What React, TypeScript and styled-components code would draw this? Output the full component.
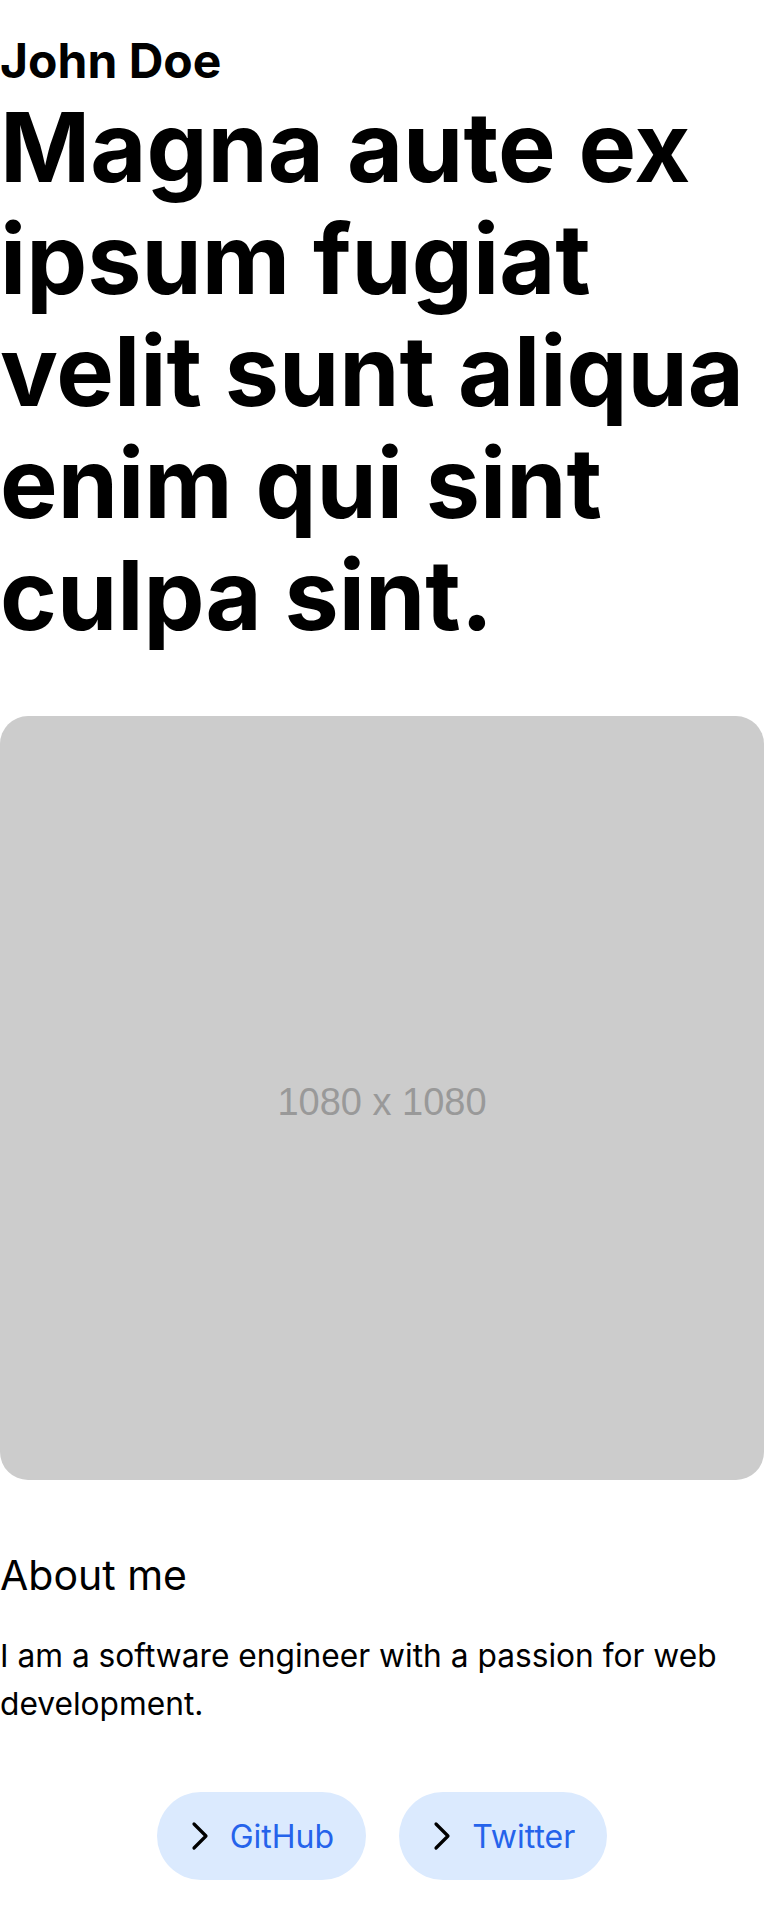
import styled, { createGlobalStyle } from "styled-components";
import { ChevronRight } from "lucide-react";

const GlobalStyle = createGlobalStyle`
    html, body {
        margin: 0;
        padding: 0;
        background: #ffffff;
    }
    body {
        font-family: Inter, "Noto Sans", sans-serif;
        color: #000000;
    }
`;

const links = [
    { label: "GitHub", href: "#github" },
    { label: "Twitter", href: "#twitter" },
];

export default function App() {
    return (
        <>
            <GlobalStyle />
            <Page>
                <Name>John Doe</Name>
                <Headline>Magna aute ex ipsum fugiat velit sunt aliqua enim qui sint culpa sint.</Headline>
                <Placeholder>
                    <PlaceholderText>1080 x 1080</PlaceholderText>
                </Placeholder>
                <SectionTitle>About me</SectionTitle>
                <Paragraph>I am a software engineer with a passion for web development.</Paragraph>
                <Links>
                    {links.map((link) => (
                        <LinkButton key={link.label} href={link.href}>
                            <ChevronRight size={48} strokeWidth={1.6} color="#000" />
                            <span>{link.label}</span>
                        </LinkButton>
                    ))}
                </Links>
            </Page>
        </>
    );
}

const Page = styled.main`
    display: flex;
    flex-direction: column;
    width: 764px;
    padding: 37px 0 32px;
`;

const Name = styled.h2`
    margin: 0;
    font-size: 48px;
    line-height: 48px;
    font-weight: 700;
`;

const Headline = styled.h1`
    margin: 6px 0 0;
    font-size: 96.8px;
    line-height: 112px;
    font-weight: 700;
`;

const Placeholder = styled.div`
    margin-top: 65px;
    width: 764px;
    height: 764px;
    box-sizing: border-box;
    padding-top: 9px;
    border-radius: 28px;
    background: #cccccc;
    display: flex;
    align-items: center;
    justify-content: center;
`;

const PlaceholderText = styled.span`
    font-family: "Liberation Sans", Arial, sans-serif;
    font-size: 38px;
    color: #999999;
`;

const SectionTitle = styled.h3`
    margin: 65px 0 0;
    font-size: 41px;
    line-height: 60px;
    font-weight: 400;
`;

const Paragraph = styled.p`
    margin: 27px 0 0;
    font-size: 31.7px;
    line-height: 48px;
`;

const Links = styled.nav`
    margin-top: 64px;
    display: flex;
    justify-content: center;
    gap: 33px;
`;

const LinkButton = styled.a`
    display: flex;
    align-items: center;
    gap: 6px;
    height: 88px;
    padding: 0 32px 0 19px;
    border-radius: 44px;
    background: #dbeafe;
    color: #2563eb;
    font-size: 32px;
    text-decoration: none;
`;
